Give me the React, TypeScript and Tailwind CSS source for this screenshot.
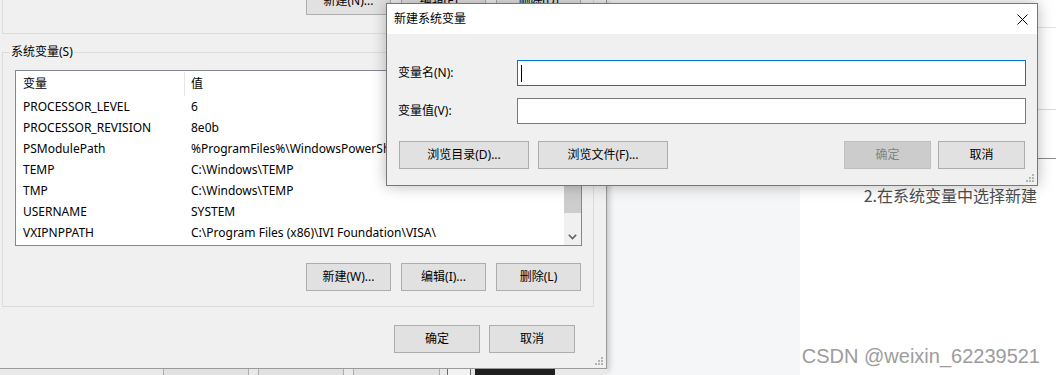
import React from 'react';

const uiFont = "font-['Noto_Sans','Noto_Sans_CJK_SC',sans-serif]";

type BtnProps = { label: string; className?: string; disabled?: boolean };

function WinButton({ label, className = '', disabled = false }: BtnProps) {
    return (
        <div
            className={`flex items-center justify-center border text-[12px] leading-none whitespace-nowrap ${
                disabled ? 'border-[#bfbfbf] bg-[#cccccc] text-[#838383]' : 'border-[#adadad] bg-[#e1e1e1] text-black'
            } ${className}`}
        >
            {label}
        </div>
    );
}

const rows = [
    ['PROCESSOR_LEVEL', '6'],
    ['PROCESSOR_REVISION', '8e0b'],
    ['PSModulePath', '%ProgramFiles%\\WindowsPowerShell\\Modules;C:\\Windows\\system32\\WindowsPowerShell\\v1.0\\Modules'],
    ['TEMP', 'C:\\Windows\\TEMP'],
    ['TMP', 'C:\\Windows\\TEMP'],
    ['USERNAME', 'SYSTEM'],
    ['VXIPNPPATH', 'C:\\Program Files (x86)\\IVI Foundation\\VISA\\'],
];

function Grip() {
    // little resize grip in the lower right corner
    return (
        <svg width="8" height="8" viewBox="0 0 8 8" className="absolute right-[3px] bottom-[3px]">
            <rect x="6" y="0" width="2" height="2" fill="#b4b4b4" />
            <rect x="3" y="3" width="2" height="2" fill="#b4b4b4" />
            <rect x="6" y="3" width="2" height="2" fill="#b4b4b4" />
            <rect x="0" y="6" width="2" height="2" fill="#b4b4b4" />
            <rect x="3" y="6" width="2" height="2" fill="#b4b4b4" />
            <rect x="6" y="6" width="2" height="2" fill="#b4b4b4" />
        </svg>
    );
}

function EnvWindow() {
    return (
        <div className={`absolute left-0 top-0 w-[607px] h-[369px] bg-[#f0f0f0] border-r border-b border-[#9a9a9a] shadow-[2px_2px_6px_rgba(0,0,0,0.22)] flex flex-col ${uiFont}`}>
            {/* user variables group (only its bottom is on screen) */}
            <div className="ml-[2px] w-[592px] h-[34px] border-x border-b border-[#dcdcdc] flex items-start justify-end gap-[10px] pr-[12px]">
                <WinButton label="新建(N)..." className="-mt-[13px] w-[85px] h-[28px]" />
                <WinButton label="编辑(E)..." className="-mt-[13px] w-[85px] h-[28px]" />
                <WinButton label="删除(D)" className="-mt-[13px] w-[85px] h-[28px]" />
            </div>

            {/* system variables group */}
            <fieldset className="ml-[2px] mt-[10px] w-[592px] min-w-0 border border-[#dcdcdc] p-0">
                <legend className="ml-[7px] px-[1px] text-[12px] leading-[16px] text-black">系统变量(S)</legend>
                <div className="pl-[12px] pr-[11px] pt-[10px] pb-[15px]">
                    <div className="w-[567px] h-[176px] border border-[#828790] bg-white flex">
                        <div className="flex-1 min-w-0 flex flex-col text-[12px] text-black overflow-hidden">
                            <div className="h-[25px] flex items-center shrink-0">
                                <div className="w-[168px] pl-[7px] shrink-0">变量</div>
                                <div className="w-px h-[24px] bg-[#e5e5e5] shrink-0" />
                                <div className="pl-[6px]">值</div>
                            </div>
                            {rows.map(([name, value]) => (
                                <div key={name} className="h-[21px] flex items-center shrink-0 whitespace-nowrap">
                                    <div className="w-[169px] pl-[7px] shrink-0">{name}</div>
                                    <div className="pl-[6px]">{value}</div>
                                </div>
                            ))}
                        </div>
                        {/* scrollbar */}
                        <div className="w-[17px] shrink-0 bg-[#f0f0f0] flex flex-col">
                            <div className="h-[17px]" />
                            <div className="mt-[50px] h-[75px] bg-[#cdcdcd]" />
                            <div className="flex-1" />
                            <div className="h-[17px] flex items-center justify-center">
                                <svg width="9" height="6" viewBox="0 0 9 6">
                                    <polyline points="0.8,0.8 4.5,4.5 8.2,0.8" fill="none" stroke="#606060" strokeWidth="1.6" />
                                </svg>
                            </div>
                        </div>
                    </div>

                    <div className="mt-[17px] flex justify-end gap-[10px] pr-[1px]">
                        <WinButton label="新建(W)..." className="w-[85px] h-[28px]" />
                        <WinButton label="编辑(I)..." className="w-[85px] h-[28px]" />
                        <WinButton label="删除(L)" className="w-[85px] h-[28px]" />
                    </div>
                </div>
            </fieldset>

            <div className="mt-[18px] flex justify-end gap-[9px] pr-[31px]">
                <WinButton label="确定" className="w-[86px] h-[28px]" />
                <WinButton label="取消" className="w-[86px] h-[28px]" />
            </div>
            <Grip />
        </div>
    );
}

function NewVarDialog() {
    return (
        <div className={`absolute left-[386px] top-[3px] w-[652px] h-[183px] bg-[#f0f0f0] border border-[#777777] shadow-[0_0_14px_rgba(0,0,0,0.28)] flex flex-col ${uiFont}`}>
            <div className="h-[30px] bg-white flex items-center justify-between pl-[7px] pr-[9px] text-[12px] text-black">
                <span>新建系统变量</span>
                <svg width="11" height="11" viewBox="0 0 11 11">
                    <path d="M0.5 0.5 L10.5 10.5 M10.5 0.5 L0.5 10.5" stroke="#000" strokeWidth="1" />
                </svg>
            </div>
            <div className="flex-1 flex flex-col pl-[11px] pr-[11px] text-[12px] text-black">
                <div className="mt-[26px] flex items-center">
                    <div className="w-[119px]">变量名(N):</div>
                    <div className="flex-1 h-[26px] border border-[#0078d7] bg-white flex items-center pl-[3px]">
                        <div className="w-px h-[17px] bg-black" />
                    </div>
                </div>
                <div className="mt-[12px] flex items-center">
                    <div className="w-[119px]">变量值(V):</div>
                    <div className="flex-1 h-[26px] border border-[#7a7a7a] bg-white" />
                </div>
                <div className="mt-[17px] flex items-center pl-[1px] pr-[1px]">
                    <WinButton label="浏览目录(D)..." className="w-[130px] h-[28px]" />
                    <WinButton label="浏览文件(F)..." className="ml-[9px] w-[130px] h-[28px]" />
                    <div className="flex-1" />
                    <WinButton label="确定" disabled className="w-[87px] h-[28px]" />
                    <WinButton label="取消" className="ml-[7px] w-[87px] h-[28px]" />
                </div>
            </div>
            <Grip />
        </div>
    );
}

function BottomStrip() {
    // bits of windows peeking out under the environment dialog
    return (
        <div className="absolute left-0 top-[369px] w-[607px] h-[6px] bg-[#e9e9e9] flex items-start">
            <div className="ml-[163px] w-[86px] h-[6px] border-x border-[#adadad] bg-[#e1e1e1]" />
            <div className="ml-[9px] w-[86px] h-[6px] border-x border-[#adadad] bg-[#e1e1e1]" />
            <div className="ml-[9px] w-[87px] h-[6px] border-x border-[#adadad] bg-[#e1e1e1]" />
            <div className="ml-[7px] w-[24px] h-[6px] border-x border-[#6a6a6a] bg-[#f2f2f2]" />
            <div className="ml-[4px] w-[80px] h-[6px] bg-[#1f1f1f]" />
        </div>
    );
}

export default function App() {
    return (
        <div className="relative w-[1056px] h-[375px] overflow-hidden flex">
            <div className="w-[800px] h-full bg-[#f5f6f7]" />
            <div className="flex-1 h-full bg-white flex flex-col">
                {/* panel behind the dialog */}
                <div className="h-[159px] border-b border-[#8c8c8c] flex flex-col">
                    <div className="mt-[27px] h-px bg-[#e3e3e3]" />
                    <div className="mt-[81px] h-px bg-[#dadada]" />
                </div>
                <div className="mt-[24px] pr-[19px] text-right text-[16px] leading-[24px] text-[#4d4d4d] font-['Noto_Sans_CJK_SC',sans-serif]">
                    2.在系统变量中选择新建
                </div>
            </div>

            <EnvWindow />
            <BottomStrip />
            <NewVarDialog />

            <div className="absolute right-[16px] bottom-[7px] text-[20px] leading-[24px] text-[#9c9c9c] font-['Liberation_Sans',Arial,sans-serif]">
                CSDN @weixin_62239521
            </div>
        </div>
    );
}
